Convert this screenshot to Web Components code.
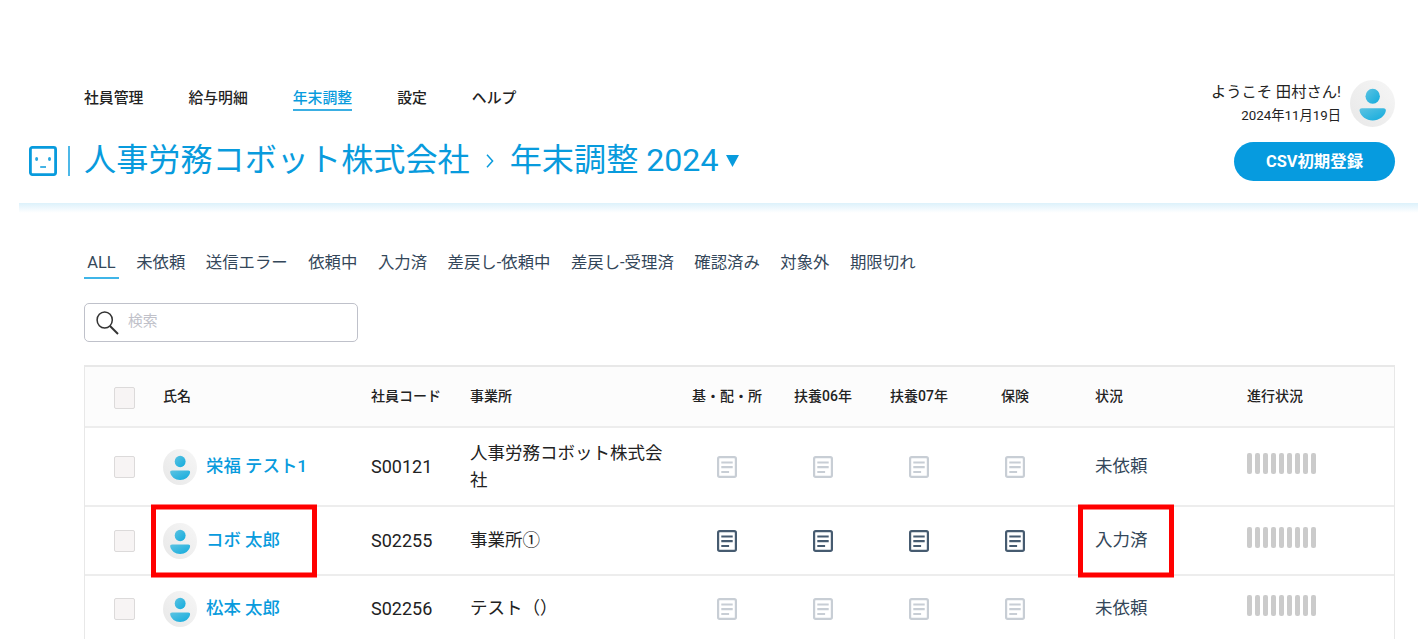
<!DOCTYPE html>
<html lang="ja">
<head>
<meta charset="utf-8">
<title>年末調整 2024</title>
<style>
    html, body {
        margin: 0;
        height: 639px;
        overflow: hidden;
        background: #fff;
    }
    body {
        font-family: Roboto, "Noto Sans CJK JP", sans-serif;
        color: #222;
    }
</style>
</head>
<body>
<payroll-app></payroll-app>
<script>
class BaseElement extends HTMLElement {
    constructor() {
        super();
        this.attachShadow({ mode: "open" });
    }
    connectedCallback() {
        this.shadowRoot.innerHTML = this.render();
    }
}

class UserAvatar extends BaseElement {
    render() {
        return `
            <style>
                :host { display: block; width: 34px; height: 36px; flex: none; }
                svg { display: block; width: 100%; height: 100%; }
            </style>
            <svg viewBox="0 0 45 47" preserveAspectRatio="none">
                <defs>
                    <linearGradient id="bg" x1="0" y1="1" x2="1" y2="0">
                        <stop offset="0" stop-color="#e8e8e8"/>
                        <stop offset="1" stop-color="#f6f6f6"/>
                    </linearGradient>
                    <linearGradient id="fg" x1="0" y1="0" x2="1" y2="1">
                        <stop offset="0" stop-color="#5cc3e2"/>
                        <stop offset="1" stop-color="#12abdd"/>
                    </linearGradient>
                </defs>
                <ellipse cx="22.5" cy="23.5" rx="22.5" ry="23.5" fill="url(#bg)"/>
                <ellipse cx="22.7" cy="16.3" rx="7.2" ry="7.5" fill="url(#fg)"/>
                <path d="M12 28.2h21.4c1.8 0 2.8 1.2 2.4 2.8-1.2 5.4-6.6 9.4-13.1 9.4S10.8 36.4 9.6 31c-.4-1.6.6-2.8 2.4-2.8z" fill="url(#fg)"/>
            </svg>
        `;
    }
}

class DocIcon extends BaseElement {
    render() {
        const color = this.hasAttribute("active") ? "#465b70" : "#c8ced5";
        return `
            <style>
                :host { display: block; width: 20px; height: 22px; }
                svg { display: block; }
            </style>
            <svg width="20" height="22" viewBox="0 0 20 22" fill="none" stroke="${color}" stroke-width="2.2">
                <rect x="1.1" y="1.1" width="17.8" height="19.8" rx="1.6"/>
                <path d="M4.3 6.5h11.4M4.3 11.2h11.4M4.3 16h7.8"/>
            </svg>
        `;
    }
}

class ProgressSteps extends BaseElement {
    render() {
        return `
            <style>
                :host { display: flex; gap: 3px; position: relative; top: -3px; }
                i { width: 5px; height: 21px; border-radius: 2px; background: #cbcbcb; }
            </style>
            ${"<i></i>".repeat(9)}
        `;
    }
}

class CheckBox extends BaseElement {
    render() {
        return `
            <style>
                :host {
                    display: block;
                    box-sizing: border-box;
                    width: 21px;
                    height: 22px;
                    border: 1px solid #dcdada;
                    border-radius: 2px;
                    background: #f7f4f4;
                }
            </style>
        `;
    }
}

class NavMenu extends BaseElement {
    render() {
        const items = ["社員管理", "給与明細", "年末調整", "設定", "ヘルプ"];
        return `
            <style>
                :host {
                    display: flex;
                    gap: 45px;
                    font-size: 14.85px;
                    font-weight: 500;
                    line-height: 22px;
                }
                a { height: 22px; }
                a.on { color: #089bdd; border-bottom: 2px solid #3aafe3; }
            </style>
            ${items.map((t, i) => `<a${i === 2 ? ' class="on"' : ""}>${t}</a>`).join("")}
        `;
    }
}

class PageTitle extends BaseElement {
    render() {
        return `
            <style>
                :host {
                    display: flex;
                    align-items: center;
                    height: 40px;
                    color: #089bdd;
                    font-size: 32.15px;
                    line-height: 40px;
                    white-space: nowrap;
                }
                .logo { margin-top: 1px; }
                .bar { width: 2px; height: 30px; margin: 1px 14px 0 11px; background: #4db8e8; }
                .arrow { margin: 1px 16px 0 16px; }
                .caret { margin: 2px 0 0 7px; }
                svg { display: block; flex: none; }
            </style>
            <svg class="logo" width="28" height="30" viewBox="0 0 28 30">
                <rect x="1.4" y="1.4" width="25.2" height="27.2" rx="2" fill="none" stroke="#089bdd" stroke-width="2.8"/>
                <ellipse cx="7.6" cy="13" rx="1.5" ry="1.9" fill="#25a7e1"/>
                <ellipse cx="20.5" cy="13" rx="1.5" ry="1.9" fill="#25a7e1"/>
                <path d="M11.2 21h5.8" stroke="#45b3e5" stroke-width="2"/>
            </svg>
            <span class="bar"></span>
            <span>人事労務コボット株式会社</span>
            <svg class="arrow" width="8" height="14" viewBox="0 0 8 14">
                <path d="M1 .8l5.6 6.2L1 13.2" fill="none" stroke="#089bdd" stroke-width="1.5"/>
            </svg>
            <span>年末調整 2024</span>
            <svg class="caret" width="13" height="12" viewBox="0 0 13 12">
                <path d="M0 0h13L6.5 12z" fill="#089bdd"/>
            </svg>
        `;
    }
}

class UserPanel extends BaseElement {
    render() {
        return `
            <style>
                :host { display: flex; flex-direction: column; align-items: flex-end; }
                .user { display: flex; align-items: center; gap: 9px; }
                .text { text-align: right; line-height: 23px; }
                .name { font-size: 15.3px; }
                .date { font-size: 13.3px; }
                user-avatar { width: 45px; height: 47px; }
                button {
                    width: 161px;
                    height: 39px;
                    margin: 15px 0 0;
                    padding: 0;
                    border: 0;
                    border-radius: 20px;
                    background: #069bdf;
                    color: #fff;
                    font: bold 16.4px/39px Roboto, "Noto Sans CJK JP", sans-serif;
                }
            </style>
            <div class="user">
                <div class="text">
                    <div class="name">ようこそ 田村さん!</div>
                    <div class="date">2024年11月19日</div>
                </div>
                <user-avatar></user-avatar>
            </div>
            <button>CSV初期登録</button>
        `;
    }
}

class FilterTabs extends BaseElement {
    render() {
        const tabs = ["ALL", "未依頼", "送信エラー", "依頼中", "入力済", "差戻し-依頼中", "差戻し-受理済", "確認済み", "対象外", "期限切れ"];
        return `
            <style>
                :host {
                    display: flex;
                    gap: 13.9px;
                    color: #34475a;
                    font-size: 16.4px;
                    line-height: 24px;
                    white-space: nowrap;
                }
                span { padding: 0 3.3px 2px; border-bottom: 2px solid transparent; }
                span.on { border-color: #3fb5e8; }
            </style>
            ${tabs.map((t, i) => `<span${i === 0 ? ' class="on"' : ""}>${t}</span>`).join("")}
        `;
    }
}

class SearchBox extends BaseElement {
    render() {
        return `
            <style>
                :host {
                    display: flex;
                    align-items: center;
                    gap: 9px;
                    box-sizing: border-box;
                    width: 274px;
                    height: 39px;
                    padding-left: 11px;
                    border: 1.5px solid #bfc1ca;
                    border-radius: 5px;
                    color: #c0c1c9;
                    font-size: 14.8px;
                    line-height: 22px;
                }
                span { margin-top: -3px; }
            </style>
            <svg width="23" height="24" viewBox="0 0 23 24" fill="none" stroke="#333" stroke-width="1.5">
                <ellipse cx="8.7" cy="9" rx="7.6" ry="8"/>
                <path d="M14 15l8 8" stroke-width="1.9"/>
            </svg>
            <span>検索</span>
        `;
    }
}

// Header line and body lines share the same column template.
const columns = "78px 208px 99px 209px repeat(4, 96px) 184px 1fr";

class TableHead extends BaseElement {
    render() {
        return `
            <style>
                :host {
                    display: grid;
                    grid-template-columns: ${columns};
                    align-items: center;
                    height: 59px;
                    background: #fcfcfc;
                    border-bottom: 2px solid #ededed;
                    font-size: 14px;
                    font-weight: 500;
                    line-height: 20px;
                }
                check-box { margin: 2px 0 0 29px; }
                span { margin-top: -2px; }
                .c { text-align: center; }
                .s { padding-left: 32px; }
            </style>
            <check-box></check-box>
            <span>氏名</span>
            <span>社員コード</span>
            <span>事業所</span>
            <span class="c">基・配・所</span>
            <span class="c">扶養06年</span>
            <span class="c">扶養07年</span>
            <span class="c">保険</span>
            <span class="s">状況</span>
            <span>進行状況</span>
        `;
    }
}

class EmployeeRow extends BaseElement {
    render() {
        const active = this.hasAttribute("active");
        const doc = `<doc-icon${active ? " active" : ""}></doc-icon>`;
        const mark = c => active ? `<div class="mark ${c}"></div>` : "";
        return `
            <style>
                :host {
                    display: grid;
                    grid-template-columns: ${columns};
                    align-items: center;
                    border-bottom: 2px solid #ededed;
                    font-size: 17.5px;
                    line-height: 27px;
                }
                check-box { margin: 1px 0 0 29px; }
                doc-icon { justify-self: center; }
                slot[name="code"] { display: block; font-size: 18px; }
                .name {
                    position: relative;
                    display: flex;
                    align-items: center;
                    gap: 9px;
                    color: #089bdd;
                    font-size: 17.4px;
                    font-weight: 500;
                }
                .office { width: 194px; }
                .status { position: relative; padding-left: 32px; color: #34475a; }
                /* red frame drawn over the cell */
                .mark {
                    position: absolute;
                    box-sizing: border-box;
                    top: 50%;
                    height: 73px;
                    transform: translateY(-50%);
                    border: 5px solid #f00;
                }
                .mark.n { left: -12px; width: 166px; }
                .mark.s { left: 15px; width: 96px; }
            </style>
            <check-box></check-box>
            <div class="name"><user-avatar></user-avatar><slot name="name"></slot>${mark("n")}</div>
            <slot name="code"></slot>
            <div class="office"><slot name="office"></slot></div>
            ${doc.repeat(4)}
            <div class="status"><slot name="status"></slot>${mark("s")}</div>
            <progress-steps></progress-steps>
        `;
    }
}

class EmployeeTable extends BaseElement {
    rows = [
        { name: "栄福 テスト1", code: "S00121", office: "人事労務コボット株式会社", status: "未依頼", height: 77 },
        { name: "コボ 太郎", code: "S02255", office: "事業所①", status: "入力済", height: 67, active: true },
        { name: "松本 太郎", code: "S02256", office: "テスト（）", status: "未依頼", height: 65 },
    ];
    render() {
        return `
            <style>
                :host {
                    display: block;
                    border: 1px solid #e8e8e8;
                    border-top-width: 2px;
                }
            </style>
            <table-head></table-head>
            ${this.rows.map(r => `
                <employee-row style="height: ${r.height}px"${r.active ? " active" : ""}>
                    <span slot="name">${r.name}</span>
                    <span slot="code">${r.code}</span>
                    <span slot="office">${r.office}</span>
                    <span slot="status">${r.status}</span>
                </employee-row>
            `).join("")}
        `;
    }
}

class PayrollApp extends BaseElement {
    render() {
        return `
            <style>
                :host { display: block; width: 1424px; height: 639px; overflow: hidden; }
                header {
                    display: flex;
                    justify-content: space-between;
                    box-sizing: border-box;
                    height: 203px;
                    padding: 80px 29px 0 29px;
                }
                nav-menu { margin: 7px 0 0 55px; }
                page-title { margin-top: 29px; }
                .shade {
                    height: 10px;
                    margin: 0 6px 0 19px;
                    background: linear-gradient(#dcf1fb, #fff);
                }
                main { padding: 38px 29px 0 84px; }
                search-box { margin: 24px 0 23px; }
            </style>
            <header>
                <div>
                    <nav-menu></nav-menu>
                    <page-title></page-title>
                </div>
                <user-panel></user-panel>
            </header>
            <div class="shade"></div>
            <main>
                <filter-tabs></filter-tabs>
                <search-box></search-box>
                <employee-table></employee-table>
            </main>
        `;
    }
}

customElements.define("user-avatar", UserAvatar);
customElements.define("doc-icon", DocIcon);
customElements.define("progress-steps", ProgressSteps);
customElements.define("check-box", CheckBox);
customElements.define("nav-menu", NavMenu);
customElements.define("page-title", PageTitle);
customElements.define("user-panel", UserPanel);
customElements.define("filter-tabs", FilterTabs);
customElements.define("search-box", SearchBox);
customElements.define("table-head", TableHead);
customElements.define("employee-row", EmployeeRow);
customElements.define("employee-table", EmployeeTable);
customElements.define("payroll-app", PayrollApp);
</script>
</body>
</html>
